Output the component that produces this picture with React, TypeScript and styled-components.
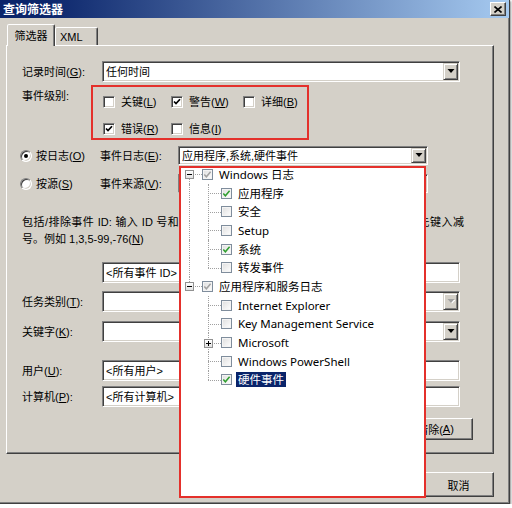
import React from "react";
import styled, { createGlobalStyle } from "styled-components";

const FACE = "#d4d0c8";
const RED = "#e4302b";

const GlobalStyle = createGlobalStyle`
  html, body { margin: 0; padding: 0; background: #ffffff; }
  body { font-family: "Liberation Sans", "Noto Sans CJK SC", sans-serif; }
  * { box-sizing: border-box; }
  u { text-underline-offset: 1px; }
`;

const Window = styled.div`
  width: 510px;
  height: 504px;
  background: ${FACE};
  border-right: 1px solid #404040;
  border-bottom: 1px solid #404040;
  box-shadow: inset -1px -1px 0 #808080, 1px 1px 2px rgba(0, 0, 0, 0.45);
  display: flex;
  flex-direction: column;
  font-size: 11px;
  color: #000;
`;

const TitleBar = styled.div`
  flex: none;
  height: 18px;
  display: flex;
  align-items: center;
  justify-content: space-between;
  padding: 0 3px 0 3px;
  background: linear-gradient(to right, #0a246a 0%, #0a246a 8%, #a6caf0 100%);
`;

const TitleText = styled.span`
  color: #fff;
  font-family: "Noto Sans CJK SC", sans-serif;
  font-weight: 700;
  font-size: 12px;
  line-height: 14px;
`;

const CloseButton = styled.div`
  width: 16px;
  height: 14px;
  background: ${FACE};
  border: 1px solid;
  border-color: #fff #404040 #404040 #fff;
  box-shadow: inset -1px -1px 0 #808080;
  display: flex;
  align-items: center;
  justify-content: center;
`;

const Body = styled.div`
  flex: 1;
  display: flex;
  flex-direction: column;
  padding: 6px 15px 0 6px;
`;

const TabStrip = styled.div`
  display: flex;
  align-items: flex-end;
  height: 21px;
  padding-left: 1px;
`;

const Tab = styled.div<{ $active?: boolean; $w: number; $padLeft: number }>`
  position: relative;
  z-index: ${(p) => (p.$active ? 1 : 0)};
  width: ${(p) => p.$w}px;
  height: ${(p) => (p.$active ? 22 : 18)}px;
  margin-bottom: ${(p) => (p.$active ? -1 : 0)}px;
  padding-left: ${(p) => p.$padLeft}px;
  display: flex;
  align-items: center;
  justify-content: ${(p) => (p.$active ? "center" : "flex-start")};
  background: ${FACE};
  border: 1px solid;
  border-bottom: none;
  border-color: #fff #404040 transparent #fff;
  border-radius: 2px 2px 0 0;
  box-shadow: inset -1px 0 0 #808080;
  font-size: 11px;
  padding-bottom: ${(p) => (p.$active ? 2 : 0)}px;
`;

const Panel = styled.div`
  height: 409px;
  display: flex;
  flex-direction: column;
  padding: 15px 0 0 15px;
  border: 1px solid;
  border-color: #fff #404040 #404040 #fff;
  box-shadow: inset -1px -1px 0 #808080;
`;

const FieldRow = styled.div<{ $mt: number; $h: number }>`
  display: flex;
  align-items: center;
  height: ${(p) => p.$h}px;
  margin-top: ${(p) => p.$mt}px;
  flex: none;
`;

const Label = styled.div<{ $w: number }>`
  flex: none;
  width: ${(p) => p.$w}px;
  white-space: nowrap;
  line-height: 14px;
`;

const Field = styled.div<{ $w: number }>`
  flex: none;
  width: ${(p) => p.$w}px;
  height: 100%;
  display: flex;
  align-items: center;
  background: #fff;
  border: 1px solid;
  border-color: #808080 #fff #fff #808080;
  box-shadow: inset 1px 1px 0 #404040, inset -1px -1px 0 ${FACE};
  padding: 0 1px 0 3px;
  overflow: hidden;
`;

const FieldText = styled.span`
  flex: 1;
  white-space: nowrap;
  overflow: hidden;
  line-height: 14px;
`;

const DropButton = styled.div`
  flex: none;
  width: 15px;
  height: calc(100% - 2px);
  display: flex;
  align-items: center;
  justify-content: center;
  background: ${FACE};
  border: 1px solid;
  border-color: ${FACE} #404040 #404040 ${FACE};
  box-shadow: inset 1px 1px 0 #fff, inset -1px -1px 0 #808080;
`;

const Arrow = ({ disabled }: { disabled?: boolean }) => (
  <svg width="8" height="5" viewBox="0 0 8 5">
    {disabled && <polygon points="1.5,1 8.5,1 5,4.5" fill="#fff" />}
    <polygon points="0.5,0 7.5,0 4,4" fill={disabled ? "#a0a0a0" : "#000"} />
  </svg>
);

const Combo = ({ w, text, disabled }: { w: number; text?: string; disabled?: boolean }) => (
  <Field $w={w}>
    <FieldText>{text}</FieldText>
    <DropButton>
      <Arrow disabled={disabled} />
    </DropButton>
  </Field>
);

/* ---- level group ---- */
const GroupRow = styled.div`
  display: flex;
  align-items: flex-start;
  margin-top: 3px;
  height: 55px;
  flex: none;
`;

const GroupLabel = styled.div`
  width: 69px;
  flex: none;
  padding-top: 4px;
  line-height: 14px;
  white-space: nowrap;
`;

const LevelBox = styled.div`
  width: 218px;
  height: 55px;
  border: 2px solid ${RED};
  padding: 8px 0 0 10px;
  display: grid;
  grid-template-columns: 68px 72px auto;
  grid-auto-rows: 14px;
  row-gap: 13px;
`;

const CheckItem = styled.label`
  display: flex;
  align-items: center;
  gap: 6px;
  white-space: nowrap;
  line-height: 14px;
`;

const ClassicBox = styled.span`
  flex: none;
  width: 12px;
  height: 12px;
  background: #fff;
  border: 1px solid;
  border-color: #808080 #fff #fff #808080;
  box-shadow: inset 1px 1px 0 #404040, inset -1px -1px 0 ${FACE};
  display: flex;
  align-items: center;
  justify-content: center;
`;

const ClassicCheck = ({ on, children }: { on: boolean; children: React.ReactNode }) => (
  <CheckItem>
    <ClassicBox>
      {on && (
        <svg width="8" height="8" viewBox="0 0 8 8">
          <polyline points="1,3.5 3,5.6 7,1.2" fill="none" stroke="#000" strokeWidth="1.7" />
        </svg>
      )}
    </ClassicBox>
    <span>{children}</span>
  </CheckItem>
);

/* ---- radios ---- */
const RadioItem = styled.div`
  flex: none;
  width: 80px;
  margin-left: -2px;
  display: flex;
  align-items: center;
  gap: 4px;
  white-space: nowrap;
  line-height: 14px;
`;

const RadioCircle = styled.span<{ $on?: boolean }>`
  position: relative;
  flex: none;
  width: 12px;
  height: 12px;
  border-radius: 50%;
  background: #fff;
  border: 1px solid;
  border-color: #808080 #fff #fff #808080;
  box-shadow: inset 1px 1px 0 #404040, inset -1px -1px 0 ${FACE};
  &::after {
    content: "";
    display: ${(p) => (p.$on ? "block" : "none")};
    position: absolute;
    left: 3px;
    top: 3px;
    width: 4px;
    height: 4px;
    border-radius: 50%;
    background: #000;
  }
`;

const ComboAnchor = styled.div`
  position: relative;
  height: 100%;
`;

/* ---- description ---- */
const Desc = styled.div`
  margin-top: 21px;
  flex: none;
  line-height: 17px;
`;

const DescLine = styled.div<{ $justify?: boolean }>`
  white-space: nowrap;
  width: ${(p) => (p.$justify ? "442px" : "auto")};
  text-align: ${(p) => (p.$justify ? "justify" : "left")};
  text-align-last: ${(p) => (p.$justify ? "justify" : "auto")};
`;

/* ---- buttons ---- */
const PushButton = styled.div<{ $w: number; $h: number }>`
  flex: none;
  width: ${(p) => p.$w}px;
  height: ${(p) => p.$h}px;
  display: flex;
  align-items: center;
  justify-content: center;
  background: ${FACE};
  border: 1px solid;
  border-color: #fff #404040 #404040 #fff;
  box-shadow: inset -1px -1px 0 #808080;
  white-space: nowrap;
`;

const ClearRow = styled.div`
  display: flex;
  justify-content: flex-end;
  margin-top: 11px;
  padding-right: 20px;
`;

const ButtonBar = styled.div`
  display: flex;
  justify-content: flex-end;
  gap: 6px;
  margin-top: 18px;
`;

/* ---- popup tree ---- */
const Popup = styled.div`
  position: absolute;
  z-index: 10;
  left: 1px;
  top: calc(100% + 1px);
  width: 247px;
  height: 332px;
  background: #fff;
  border: 2px solid ${RED};
  overflow: hidden;
`;

const TreeList = styled.div`
  margin-top: -3px;
  font-family: "Noto Sans", "Noto Sans CJK SC", sans-serif;
  font-size: 11.5px;
  color: #000;
`;

const TreeRow = styled.div`
  display: flex;
  align-items: center;
  height: 18.7px;
  white-space: nowrap;
`;

const GuideCell = styled.div<{ $line: boolean }>`
  position: relative;
  flex: none;
  width: 19px;
  align-self: stretch;
  &::before {
    content: "";
    display: ${(p) => (p.$line ? "block" : "none")};
    position: absolute;
    left: 8px;
    top: 0;
    bottom: 0;
    border-left: 1px dotted #a0a0a0;
  }
`;

const ExpCell = styled.div<{ $top: boolean; $bottom: boolean }>`
  position: relative;
  flex: none;
  width: 17px;
  align-self: stretch;
  &::before {
    content: "";
    position: absolute;
    left: 8px;
    top: ${(p) => (p.$top ? "0" : "50%")};
    bottom: ${(p) => (p.$bottom ? "0" : "50%")};
    border-left: 1px dotted #a0a0a0;
  }
  &::after {
    content: "";
    position: absolute;
    left: 8px;
    right: -4px;
    top: 50%;
    border-top: 1px dotted #a0a0a0;
  }
`;

const ExpBox = styled.span`
  position: absolute;
  z-index: 1;
  left: 4px;
  top: 50%;
  margin-top: -4px;
  width: 9px;
  height: 9px;
  border: 1px solid #919191;
  background: linear-gradient(#ffffff, #e2e2e2);
  display: flex;
  align-items: center;
  justify-content: center;
`;

const TreeBox = styled.span`
  flex: none;
  width: 11px;
  height: 11px;
  margin-left: 4px;
  border: 1px solid #7f8d9c;
  background: linear-gradient(135deg, #dedede, #ffffff);
  box-shadow: inset 0 0 0 1px #f4f4f4;
  display: flex;
  align-items: center;
  justify-content: center;
`;

const TreeText = styled.span<{ $selected?: boolean }>`
  margin-left: ${(p) => (p.$selected ? 4 : 6)}px;
  padding: 0 ${(p) => (p.$selected ? 2 : 0)}px;
  line-height: 15px;
  background: ${(p) => (p.$selected ? "#0a246a" : "transparent")};
  color: ${(p) => (p.$selected ? "#fff" : "#000")};
`;

type Node = {
  label: string;
  guides: boolean[];
  exp?: "minus" | "plus";
  check: "none" | "green" | "gray";
  top: boolean;
  bottom: boolean;
  selected?: boolean;
};

const tree: Node[] = [
  { label: "Windows 日志", guides: [], exp: "minus", check: "gray", top: false, bottom: true },
  { label: "应用程序", guides: [true], check: "green", top: true, bottom: true },
  { label: "安全", guides: [true], check: "none", top: true, bottom: true },
  { label: "Setup", guides: [true], check: "none", top: true, bottom: true },
  { label: "系统", guides: [true], check: "green", top: true, bottom: true },
  { label: "转发事件", guides: [true], check: "none", top: true, bottom: false },
  { label: "应用程序和服务日志", guides: [], exp: "minus", check: "gray", top: true, bottom: false },
  { label: "Internet Explorer", guides: [false], check: "none", top: true, bottom: true },
  { label: "Key Management Service", guides: [false], check: "none", top: true, bottom: true },
  { label: "Microsoft", guides: [false], exp: "plus", check: "none", top: true, bottom: true },
  { label: "Windows PowerShell", guides: [false], check: "none", top: true, bottom: true },
  { label: "硬件事件", guides: [false], check: "green", top: true, bottom: false, selected: true },
];

const TreeItem = ({ n }: { n: Node }) => (
  <TreeRow>
    {n.guides.map((g, i) => (
      <GuideCell key={i} $line={g} />
    ))}
    <ExpCell $top={n.top} $bottom={n.bottom}>
      {n.exp && (
        <ExpBox>
          <svg width="7" height="7" viewBox="0 0 7 7">
            <path d="M1 3.5H6" stroke="#000" strokeWidth="1" />
            {n.exp === "plus" && <path d="M3.5 1V6" stroke="#000" strokeWidth="1" />}
          </svg>
        </ExpBox>
      )}
    </ExpCell>
    <TreeBox>
      {n.check !== "none" && (
        <svg width="9" height="9" viewBox="0 0 9 9">
          <polyline
            points="1.3,4.4 3.4,6.8 7.6,1.8"
            fill="none"
            stroke={n.check === "green" ? "#2f9e2f" : "#a2a2a2"}
            strokeWidth="1.5"
          />
        </svg>
      )}
    </TreeBox>
    <TreeText $selected={n.selected}>{n.label}</TreeText>
  </TreeRow>
);

export default function App() {
  return (
    <>
      <GlobalStyle />
      <Window>
        <TitleBar>
          <TitleText>查询筛选器</TitleText>
          <CloseButton>
            <svg width="8" height="7" viewBox="0 0 8 7">
              <path d="M0.5 0.5L7.5 6.5M7.5 0.5L0.5 6.5" stroke="#000" strokeWidth="1.6" />
            </svg>
          </CloseButton>
        </TitleBar>
        <Body>
          <TabStrip>
            <Tab $active $w={48} $padLeft={0}>
              筛选器
            </Tab>
            <Tab $w={43} $padLeft={4}>
              XML
            </Tab>
          </TabStrip>
          <Panel>
            <FieldRow $mt={0} $h={21}>
              <Label $w={80}>
                记录时间(<u>G</u>):
              </Label>
              <Combo w={358} text="任何时间" />
            </FieldRow>

            <GroupRow>
              <GroupLabel>事件级别:</GroupLabel>
              <LevelBox>
                <ClassicCheck on={false}>
                  关键(<u>L</u>)
                </ClassicCheck>
                <ClassicCheck on>
                  警告(<u>W</u>)
                </ClassicCheck>
                <ClassicCheck on={false}>
                  详细(<u>B</u>)
                </ClassicCheck>
                <ClassicCheck on>
                  错误(<u>R</u>)
                </ClassicCheck>
                <ClassicCheck on={false}>
                  信息(<u>I</u>)
                </ClassicCheck>
              </LevelBox>
            </GroupRow>

            <FieldRow $mt={6} $h={19}>
              <RadioItem>
                <RadioCircle $on />
                <span>
                  按日志(<u>O</u>)
                </span>
              </RadioItem>
              <Label $w={78}>
                事件日志(<u>E</u>):
              </Label>
              <ComboAnchor>
                <Combo w={250} text="应用程序,系统,硬件事件" />
                <Popup>
                  <TreeList>
                    {tree.map((n, i) => (
                      <TreeItem key={i} n={n} />
                    ))}
                  </TreeList>
                </Popup>
              </ComboAnchor>
            </FieldRow>

            <FieldRow $mt={9} $h={19}>
              <RadioItem>
                <RadioCircle />
                <span>
                  按源(<u>S</u>)
                </span>
              </RadioItem>
              <Label $w={78}>
                事件来源(<u>V</u>):
              </Label>
              <Combo w={250} />
            </FieldRow>

            <Desc>
              <DescLine $justify>
                包括/排除事件 ID: 输入 ID 号和/或 ID 范围，使用逗号分隔。若要排除条件，请先键入减
              </DescLine>
              <DescLine>
                号。例如 1,3,5-99,-76(<u>N</u>)
              </DescLine>
            </Desc>

            <FieldRow $mt={14} $h={21}>
              <Label $w={80} />
              <Field $w={358}>
                <FieldText>&lt;所有事件 ID&gt;</FieldText>
              </Field>
            </FieldRow>

            <FieldRow $mt={8} $h={21}>
              <Label $w={80}>
                任务类别(<u>T</u>):
              </Label>
              <Combo w={358} disabled />
            </FieldRow>

            <FieldRow $mt={9} $h={21}>
              <Label $w={80}>
                关键字(<u>K</u>):
              </Label>
              <Combo w={358} />
            </FieldRow>

            <FieldRow $mt={18} $h={21}>
              <Label $w={80}>
                用户(<u>U</u>):
              </Label>
              <Field $w={358}>
                <FieldText>&lt;所有用户&gt;</FieldText>
              </Field>
            </FieldRow>

            <FieldRow $mt={5} $h={21}>
              <Label $w={80}>
                计算机(<u>P</u>):
              </Label>
              <Field $w={358}>
                <FieldText>&lt;所有计算机&gt;</FieldText>
              </Field>
            </FieldRow>

            <ClearRow>
              <PushButton $w={75} $h={22}>
                清除(<u>A</u>)
              </PushButton>
            </ClearRow>
          </Panel>

          <ButtonBar>
            <PushButton $w={71} $h={25}>
              确定
            </PushButton>
            <PushButton $w={71} $h={25}>
              取消
            </PushButton>
          </ButtonBar>
        </Body>
      </Window>
    </>
  );
}
